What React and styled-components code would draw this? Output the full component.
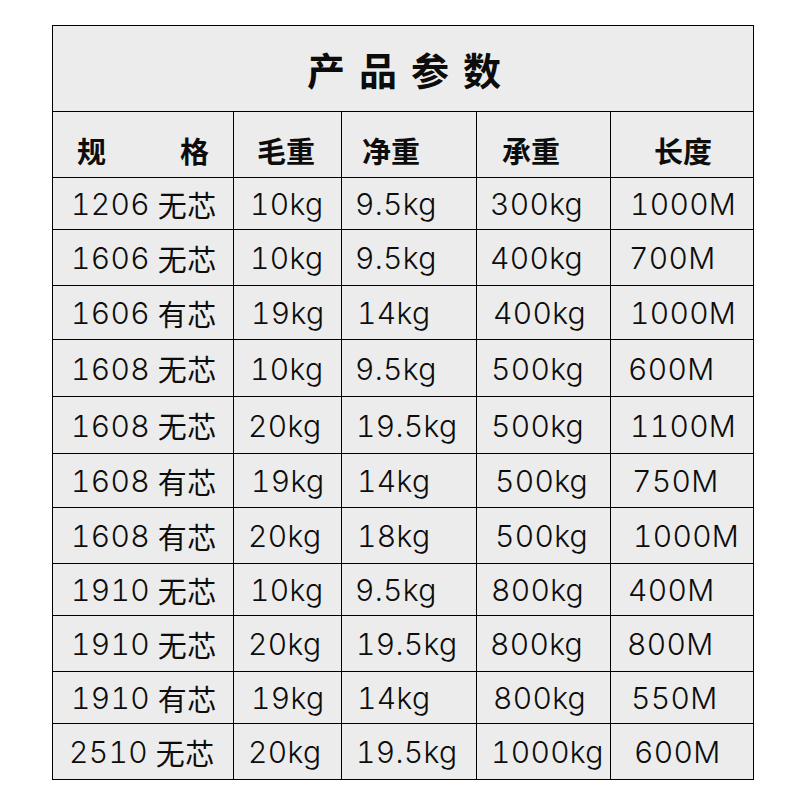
import React from 'react';
import styled, { createGlobalStyle } from 'styled-components';

const GlobalStyle = createGlobalStyle`
  html, body {
    margin: 0;
    padding: 0;
    background: #ffffff;
  }
  * {
    box-sizing: border-box;
  }
`;

const Page = styled.div`
  width: 800px;
  height: 800px;
  padding: 25px 0 0 52px;
  background: #fff;
  font-family: Inter, "Noto Sans CJK SC", sans-serif;
  color: #111;
`;

const Table = styled.div`
  width: 702px;
  display: flex;
  flex-direction: column;
  border-top: 1px solid #000;
  border-left: 1px solid #000;
  background: #ececec;
`;

const TitleRow = styled.div`
  height: 86px;
  display: flex;
  align-items: center;
  justify-content: center;
  border-right: 1px solid #000;
  border-bottom: 1px solid #000;
  font-family: "Noto Sans CJK SC", sans-serif;
  font-size: 38px;
  font-weight: 700;
  letter-spacing: 14px;
  padding-left: 16px;
  color: #0c0c0c;
`;

const Row = styled.div`
  height: ${(props) => props.h}px;
  display: grid;
  grid-template-columns: 182px 108px 135px 134px 143px;
  margin-left: -1px;
`;

const Cell = styled.div`
  display: flex;
  align-items: center;
  padding-left: ${(props) => props.x}px;
  padding-top: ${(props) => (props.head ? 12 : 1)}px;
  border-right: 1px solid #000;
  border-bottom: 1px solid #000;
  border-left: ${(props) => (props.first ? '1px solid #000' : 'none')};
  font-family: ${(props) => (props.head ? '"Noto Sans CJK SC", sans-serif' : 'Inter, "Noto Sans CJK SC", sans-serif')};
  font-size: ${(props) => (props.head ? 29 : 30)}px;
  font-weight: ${(props) => (props.head ? 700 : 300)};
  font-variant-numeric: tabular-nums;
  letter-spacing: ${(props) => (props.head ? 0 : 0.3)}px;
  white-space: nowrap;
  line-height: 1;
  color: #0d0d0d;
`;

const SpecHead = styled(Cell)`
  justify-content: space-between;
  padding-right: 24px;
`;

const Cn = styled.span`
  margin-left: 8px;
  font-family: "Noto Sans CJK SC", sans-serif;
  font-weight: 400;
  font-size: 29px;
  letter-spacing: 0.5px;
`;

const starts = [52, 234, 342, 477, 611];

const rows = [
  { h: 52, spec: '1206', core: '无芯', cells: [['10kg', 250], ['9.5kg', 355], ['300kg', 490], ['1000M', 630]] },
  { h: 56, spec: '1606', core: '无芯', cells: [['10kg', 250], ['9.5kg', 355], ['400kg', 490], ['700M', 629]] },
  { h: 54, spec: '1606', core: '有芯', cells: [['19kg', 251], ['14kg', 357], ['400kg', 493], ['1000M', 630]] },
  { h: 57, spec: '1608', core: '无芯', cells: [['10kg', 250], ['9.5kg', 355], ['500kg', 491], ['600M', 628]] },
  { h: 57, spec: '1608', core: '无芯', cells: [['20kg', 248], ['19.5kg', 356], ['500kg', 491], ['1100M', 630]] },
  { h: 54, spec: '1608', core: '有芯', cells: [['19kg', 251], ['14kg', 357], ['500kg', 495], ['750M', 632]] },
  { h: 56, spec: '1608', core: '有芯', cells: [['20kg', 248], ['18kg', 357], ['500kg', 495], ['1000M', 633]] },
  { h: 52, spec: '1910', core: '无芯', cells: [['10kg', 250], ['9.5kg', 355], ['800kg', 491], ['400M', 628]] },
  { h: 56, spec: '1910', core: '无芯', cells: [['20kg', 248], ['19.5kg', 356], ['800kg', 490], ['800M', 627]] },
  { h: 52, spec: '1910', core: '有芯', cells: [['19kg', 251], ['14kg', 357], ['800kg', 493], ['550M', 631]] },
  { h: 56, spec: '2510', core: '无芯', cells: [['20kg', 248], ['19.5kg', 356], ['1000kg', 491], ['600M', 634]] },
];

const heads = [['毛重', 257], ['净重', 362], ['承重', 502], ['长度', 654]];

export default function App() {
  return (
    <>
      <GlobalStyle />
      <Page>
        <Table>
          <TitleRow>产品参数</TitleRow>
          <Row h={66}>
            <SpecHead head first x={24}>
              <span>规</span>
              <span>格</span>
            </SpecHead>
            {heads.map(([t, x], i) => (
              <Cell head key={t} x={x - starts[i + 1]}>
                {t}
              </Cell>
            ))}
          </Row>
          {rows.map((r, ri) => (
            <Row h={r.h} key={ri}>
              <Cell first x={ri === 10 ? 16 : 18}>
                {r.spec}
                <Cn>{r.core}</Cn>
              </Cell>
              {r.cells.map(([t, x], i) => (
                <Cell key={i} x={x - starts[i + 1]}>
                  {t}
                </Cell>
              ))}
            </Row>
          ))}
        </Table>
      </Page>
    </>
  );
}
